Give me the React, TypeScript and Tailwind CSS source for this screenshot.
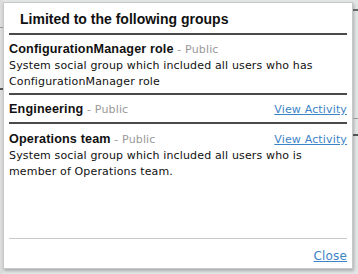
import React from 'react';

const groups = [
  {
    name: 'ConfigurationManager role',
    desc: 'System social group which included all users who has ConfigurationManager role',
    activity: false,
  },
  { name: 'Engineering', desc: '', activity: true },
  {
    name: 'Operations team',
    desc: 'System social group which included all users who is member of Operations team.',
    activity: true,
  },
];

const bold = { fontFamily: '"Liberation Sans", Arial, sans-serif' };

function GroupRow({ name, desc, activity, last }: { name: string; desc: string; activity: boolean; last: boolean }) {
  return (
    <div className={last ? 'pt-[7px]' : 'pt-[6px] pb-[4px] border-b-2 border-[#4a4a4a]'}>
      <div className="flex items-baseline justify-between">
        <div className="leading-[16px]">
          <span className="font-bold text-[12.6px] text-[#111]" style={bold}>{name}</span>
          <span className="text-[#999]"> - Public</span>
        </div>
        {activity && <a className="text-[#3d84c6] underline cursor-pointer leading-[16px]">View Activity</a>}
      </div>
      {desc && <p className="leading-[15.5px] text-[#111] pr-[30px]">{desc}</p>}
    </div>
  );
}

export default function App() {
  return (
    <div
      className="flex w-[358px] h-[274px] bg-[#e2e6e6] overflow-hidden tracking-[0.15px]"
      style={{ fontFamily: '"DejaVu Sans", Tahoma, sans-serif' }}
    >
      {/* edge of the page behind the dialog, left */}
      <div className="w-[3px] shrink-0 flex flex-col bg-[#dcdcdc]">
        <div className="mt-[27px] h-[1px] bg-[#999]" />
        <div className="mt-[60px] h-[2px] bg-[#555]" />
      </div>

      <div className="mt-[2px] w-[350px] h-[267px] shrink-0 bg-white border border-[#c8c8c8] shadow-[1px_2px_3px_rgba(0,0,0,0.25)] flex flex-col text-[11px]">
        <h2
          className="pl-[11px] pt-[7px] pb-[5px] mx-[5px] border-b-2 border-[#4a4a4a] font-bold text-[14px] leading-[18px] text-[#111] tracking-normal"
          style={bold}
        >
          Limited to the following groups
        </h2>
        <div className="mx-[5px]">
          {groups.map((g, i) => (
            <GroupRow key={g.name} {...g} last={i === groups.length - 1} />
          ))}
        </div>
        <div className="mt-auto mx-[5px] border-t border-[#c8c8c8] flex justify-end pt-[9px] pb-[4px]">
          <a className="text-[#3d84c6] underline cursor-pointer text-[12px] leading-[16px]">Close</a>
        </div>
      </div>

      {/* edge of the page behind the dialog, right */}
      <div className="flex-1 flex flex-col">
        <div className="mt-[9px] h-[2px] bg-[#666]" />
        <div className="mt-[107px] h-[1px] bg-[#999]" />
        <div className="mt-[15px] h-[2px] bg-[#555]" />
      </div>
    </div>
  );
}
